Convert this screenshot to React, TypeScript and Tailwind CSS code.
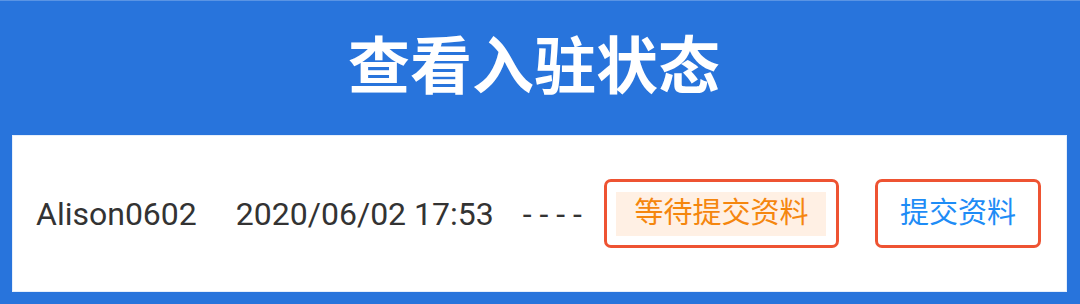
const latin = '"Roboto", "Noto Sans CJK SC", sans-serif';

function StatusBadge() {
  return (
    <div className="ml-[22px] flex h-[69px] w-[235px] items-center justify-center rounded-[7px] border-[3px] border-[#ee5332]">
      <span className="flex h-[44px] w-[210px] items-center justify-center bg-[#fff0e4] text-[29px] leading-none text-[#f5860e]">
        等待提交资料
      </span>
    </div>
  );
}

export default function App() {
  return (
    <div
      className="flex h-[304px] w-[1080px] flex-col border-t border-[#5a94e4] bg-[#2874dc]"
      style={{ fontFamily: latin }}
    >
      <header className="flex h-[134px] items-center justify-center pr-[12px] text-[62px] font-bold leading-none text-white">
        查看入驻状态
      </header>
      <div className="ml-[12px] mr-[13px] flex h-[157px] items-center border border-[#e6effb] bg-white pl-[23px] text-[32px] leading-none text-[#333333]">
        <span>Alison0602</span>
        <span className="ml-[39px]">2020/06/02 17:53</span>
        <span className="ml-[29px]">- - - -</span>
        <StatusBadge />
        <button className="ml-[36px] flex h-[69px] w-[166px] items-center justify-center rounded-[7px] border-[3px] border-[#ee5332] text-[29px] leading-none text-[#1e8cf6]">
          提交资料
        </button>
      </div>
    </div>
  );
}
